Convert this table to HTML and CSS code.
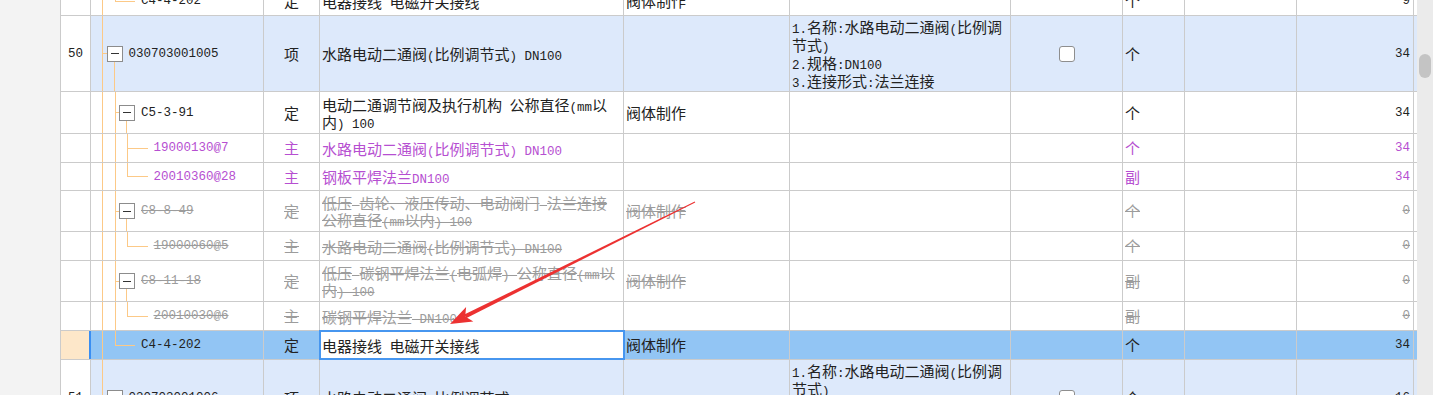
FILE: index.html
```html
<!DOCTYPE html>
<html lang="zh-CN">
<head>
<meta charset="utf-8">
<title>清单</title>
<link rel="stylesheet" href="styles.css">
</head>
<body>
<div class="gutter"></div>
<div class="sheet">
  <div class="row r29">
    <div class="c c1"></div>
    <div class="c c2"><span class="g pad"></span><span class="g v"></span><span class="g elb"></span><span class="g hl"></span><span class="code">C4-4-202</span></div>
    <div class="c c3"><span class="t">定</span></div>
    <div class="c c4"><span class="t">电器接线<span class="a"> </span>电磁开关接线</span></div>
    <div class="c c5"><span class="t">阀体制作</span></div>
    <div class="c c6"></div><div class="c c7"></div>
    <div class="c c8"><span class="t">个</span></div>
    <div class="c c9"></div>
    <div class="c c10"><span class="t a">9</span></div>
    <div class="c c11"></div>
  </div>

  <div class="row r76 item">
    <div class="c c1"><span class="t a">50</span></div>
    <div class="c c2"><span class="g pad"></span><span class="g teeb"></span><span class="g bw"><span class="box"></span></span><span class="code">030703001005</span></div>
    <div class="c c3"><span class="t">项</span></div>
    <div class="c c4"><span class="t">水路电动二通阀<span class="a">(</span>比例调节式<span class="a">) DN100</span></span></div>
    <div class="c c5"></div>
    <div class="c c6"><span class="t"><span class="a">1.</span>名称<span class="a">:</span>水路电动二通阀<span class="a">(</span>比例调<br>节式<span class="a">)</span><br><span class="a">2.</span>规格<span class="a">:DN100</span><br><span class="a">3.</span>连接形式<span class="a">:</span>法兰连接</span></div>
    <div class="c c7"><span class="chk"></span></div>
    <div class="c c8"><span class="t">个</span></div>
    <div class="c c9"></div>
    <div class="c c10"><span class="t a">34</span></div>
    <div class="c c11"></div>
  </div>

  <div class="row r42">
    <div class="c c1"></div>
    <div class="c c2"><span class="g pad"></span><span class="g v"></span><span class="g teeb"></span><span class="g bw"><span class="box"></span></span><span class="code">C5-3-91</span></div>
    <div class="c c3"><span class="t">定</span></div>
    <div class="c c4"><span class="t">电动二通调节阀及执行机构<span class="a"> </span>公称直径<span class="a">(mm</span>以<br>内<span class="a">) 100</span></span></div>
    <div class="c c5"><span class="t">阀体制作</span></div>
    <div class="c c6"></div><div class="c c7"></div>
    <div class="c c8"><span class="t">个</span></div>
    <div class="c c9"></div>
    <div class="c c10"><span class="t a">34</span></div>
    <div class="c c11"></div>
  </div>

  <div class="row r29 pur">
    <div class="c c1"></div>
    <div class="c c2"><span class="g pad"></span><span class="g v"></span><span class="g v"></span><span class="g tee"></span><span class="g hl"></span><span class="code">19000130@7</span></div>
    <div class="c c3"><span class="t">主</span></div>
    <div class="c c4"><span class="t">水路电动二通阀<span class="a">(</span>比例调节式<span class="a">) DN100</span></span></div>
    <div class="c c5"></div>
    <div class="c c6"></div><div class="c c7"></div>
    <div class="c c8"><span class="t">个</span></div>
    <div class="c c9"></div>
    <div class="c c10"><span class="t a">34</span></div>
    <div class="c c11"></div>
  </div>

  <div class="row r28 pur">
    <div class="c c1"></div>
    <div class="c c2"><span class="g pad"></span><span class="g v"></span><span class="g v"></span><span class="g elb"></span><span class="g hl"></span><span class="code">20010360@28</span></div>
    <div class="c c3"><span class="t">主</span></div>
    <div class="c c4"><span class="t">钢板平焊法兰<span class="a">DN100</span></span></div>
    <div class="c c5"></div>
    <div class="c c6"></div><div class="c c7"></div>
    <div class="c c8"><span class="t">副</span></div>
    <div class="c c9"></div>
    <div class="c c10"><span class="t a">34</span></div>
    <div class="c c11"></div>
  </div>

  <div class="row r41 del">
    <div class="c c1"></div>
    <div class="c c2"><span class="g pad"></span><span class="g v"></span><span class="g teeb"></span><span class="g bw"><span class="box"></span></span><span class="code">C8-8-49</span></div>
    <div class="c c3"><span class="t">定</span></div>
    <div class="c c4"><span class="t">低压<span class="a"> </span>齿轮、液压传动、电动阀门<span class="a"> </span>法兰连接<br>公称直径<span class="a">(mm</span>以内<span class="a">) 100</span></span></div>
    <div class="c c5"><span class="t">阀体制作</span></div>
    <div class="c c6"></div><div class="c c7"></div>
    <div class="c c8"><span class="t">个</span></div>
    <div class="c c9"></div>
    <div class="c c10"><span class="t a">0</span></div>
    <div class="c c11"></div>
  </div>

  <div class="row r29 del">
    <div class="c c1"></div>
    <div class="c c2"><span class="g pad"></span><span class="g v"></span><span class="g v"></span><span class="g elb"></span><span class="g hl"></span><span class="code">19000060@5</span></div>
    <div class="c c3"><span class="t">主</span></div>
    <div class="c c4"><span class="t">水路电动二通阀<span class="a">(</span>比例调节式<span class="a">) DN100</span></span></div>
    <div class="c c5"></div>
    <div class="c c6"></div><div class="c c7"></div>
    <div class="c c8"><span class="t">个</span></div>
    <div class="c c9"></div>
    <div class="c c10"><span class="t a">0</span></div>
    <div class="c c11"></div>
  </div>

  <div class="row r41 del">
    <div class="c c1"></div>
    <div class="c c2"><span class="g pad"></span><span class="g v"></span><span class="g teeb"></span><span class="g bw"><span class="box"></span></span><span class="code">C8-11-18</span></div>
    <div class="c c3"><span class="t">定</span></div>
    <div class="c c4"><span class="t">低压<span class="a"> </span>碳钢平焊法兰<span class="a">(</span>电弧焊<span class="a">) </span>公称直径<span class="a">(mm</span>以<br>内<span class="a">) 100</span></span></div>
    <div class="c c5"><span class="t">阀体制作</span></div>
    <div class="c c6"></div><div class="c c7"></div>
    <div class="c c8"><span class="t">副</span></div>
    <div class="c c9"></div>
    <div class="c c10"><span class="t a">0</span></div>
    <div class="c c11"></div>
  </div>

  <div class="row r29 del">
    <div class="c c1"></div>
    <div class="c c2"><span class="g pad"></span><span class="g v"></span><span class="g v"></span><span class="g elb"></span><span class="g hl"></span><span class="code">20010030@6</span></div>
    <div class="c c3"><span class="t">主</span></div>
    <div class="c c4"><span class="t">碳钢平焊法兰<span class="a"> DN100</span></span></div>
    <div class="c c5"></div>
    <div class="c c6"></div><div class="c c7"></div>
    <div class="c c8"><span class="t">副</span></div>
    <div class="c c9"></div>
    <div class="c c10"><span class="t a">0</span></div>
    <div class="c c11"></div>
  </div>

  <div class="row r29 sel">
    <div class="c c1"></div>
    <div class="c c2"><span class="g pad"></span><span class="g v"></span><span class="g elb"></span><span class="g hl"></span><span class="code">C4-4-202</span></div>
    <div class="c c3"><span class="t">定</span></div>
    <div class="c c4 edit"><span class="t">电器接线<span class="a"> </span>电磁开关接线</span></div>
    <div class="c c5"><span class="t">阀体制作</span></div>
    <div class="c c6"></div><div class="c c7"></div>
    <div class="c c8"><span class="t">个</span></div>
    <div class="c c9"></div>
    <div class="c c10"><span class="t a">34</span></div>
    <div class="c c11"></div>
  </div>

  <div class="row r76 item">
    <div class="c c1"><span class="t a">51</span></div>
    <div class="c c2"><span class="g pad"></span><span class="g teeb"></span><span class="g bw"><span class="box"></span></span><span class="code">030703001006</span></div>
    <div class="c c3"><span class="t">项</span></div>
    <div class="c c4"><span class="t">水路电动二通阀<span class="a">(</span>比例调节式<span class="a">) DN125</span></span></div>
    <div class="c c5"></div>
    <div class="c c6"><span class="t"><span class="a">1.</span>名称<span class="a">:</span>水路电动二通阀<span class="a">(</span>比例调<br>节式<span class="a">)</span><br><span class="a">2.</span>规格<span class="a">:DN125</span><br><span class="a">3.</span>连接形式<span class="a">:</span>法兰连接</span></div>
    <div class="c c7"><span class="chk"></span></div>
    <div class="c c8"><span class="t">个</span></div>
    <div class="c c9"></div>
    <div class="c c10"><span class="t a">16</span></div>
    <div class="c c11"></div>
  </div>
</div>
<div class="scroll"><div class="thumb"></div></div>

<svg class="arrow" width="1433" height="395" viewBox="0 0 1433 395" aria-hidden="true">
  <polygon points="464.3,314.6 694.8,201.6 695.2,202.4 466.1,318.2" fill="#ec3131"/>
  <polygon points="450,324 473.3,321.4 465.2,316.4 466.1,307" fill="#ec3131"/>
</svg>
</body>
</html>
```

FILE: styles.css
```css
html, body {
  margin: 0;
  height: 395px;
  overflow: hidden;
}

body {
  position: relative;
  display: flex;
  background: #f3f3f3;
  font-family: "Noto Sans CJK SC", sans-serif;
  font-size: 15px;
  line-height: 16px;
  color: #222;
}

.gutter {
  flex: none;
  width: 60px;
}

.sheet {
  flex: none;
  align-self: flex-start;
  width: 1357px;
  box-sizing: border-box;
  margin-top: -13px;
  border-left: 1px solid #cbcbcb;
  background: #fff;
}

.row {
  display: grid;
  grid-template-columns: 30px 173px 56px 304px 166px 221px 112px 62px 112px 117px 3px;
  box-sizing: border-box;
  border-bottom: 1px solid #cbcbcb;
}

.r28 { height: 28px; }
.r29 { height: 29px; }
.r41 { height: 41px; }
.r42 { height: 42px; }
.r76 { height: 76px; }

.c {
  display: flex;
  align-items: center;
  box-sizing: border-box;
  min-width: 0;
  overflow: hidden;
  white-space: nowrap;
  border-right: 1px solid #cbcbcb;
}

.c11 { border-right: 0; }

.c1, .c3, .c7 { justify-content: center; }

.c4, .c5, .c6, .c8 { padding-left: 2px; }

.c4 { line-height: 17px; }

.c6 { line-height: 18px; }

.c10 {
  justify-content: flex-end;
  padding-right: 3px;
}

.c2 { align-items: stretch; }

.a, .code {
  font-family: "Liberation Mono", monospace;
  font-size: 12.5px;
  white-space: pre;
}

.t .a { line-height: 10px; }

/* tree guides */
.g { flex: none; }
.pad { width: 5px; }
.v, .tee, .elb { width: 12.5px; }
.teeb { width: 10.5px; }
.hl { width: 14px; }

.v {
  background: linear-gradient(#fcc987, #fcc987) 6px 0 / 1px 100% no-repeat;
}

.tee, .teeb {
  background:
    linear-gradient(#fcc987, #fcc987) 6px 0 / 1px 100% no-repeat,
    linear-gradient(#fcc987, #fcc987) 6px 50% / 100% 1px no-repeat;
}

.elb {
  background:
    linear-gradient(#fcc987, #fcc987) 6px 0 / 1px 50% no-repeat,
    linear-gradient(#fcc987, #fcc987) 6px 50% / 100% 1px no-repeat;
}

.hl {
  background: linear-gradient(#fcc987, #fcc987) 0 50% / 100% 1px no-repeat;
}

.bw {
  width: 16px;
  display: flex;
  align-items: center;
  background: linear-gradient(#fcc987, #fcc987) 7px 100% / 1px 50% no-repeat;
}

.box {
  width: 16px;
  height: 16px;
  box-sizing: border-box;
  border: 1px solid #8c8c8c;
  background: linear-gradient(#333, #333) center / 8px 1px no-repeat, #fff;
}

.code {
  align-self: center;
  margin-left: 6px;
}

.chk {
  width: 16px;
  height: 16px;
  box-sizing: border-box;
  border: 1px solid #8e8e8e;
  border-radius: 3px;
  background: #fff;
}

/* row states */
.item { background: #dde9fb; }
.item .c1 { background: #fff; }

.sel { background: #92c5f4; }
.sel .c1 {
  background: #fde7c9;
  border-right-color: #3a8ef2;
  box-shadow: inset -1px 0 #3a8ef2;
}

.edit {
  background: #fff;
  outline: 2px solid #4796ef;
  outline-offset: -1px;
}

.pur { color: #b64fd1; }

.del { color: #9c9c9c; }
.del .t, .del .code { text-decoration: line-through; }
.del .t .a {
  display: inline-block;
  text-decoration: line-through;
}

.scroll {
  flex: none;
  width: 16px;
  box-sizing: border-box;
  padding: 54px 2px 0;
  background: #ebebeb;
}

.thumb {
  height: 24px;
  border-radius: 6px;
  background: #c4c4c4;
}

.arrow {
  position: absolute;
  left: 0;
  top: 0;
  pointer-events: none;
}
```
